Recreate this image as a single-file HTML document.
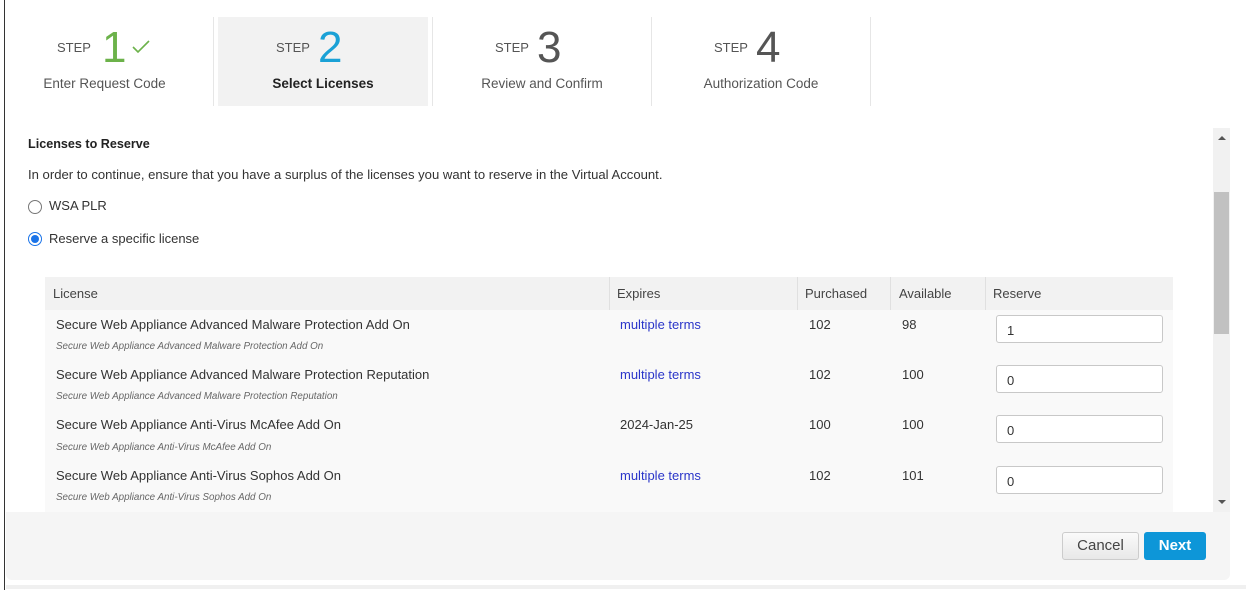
<!DOCTYPE html>
<html><head><style>
*{margin:0;padding:0;box-sizing:border-box}
body{width:1252px;height:594px;background:#fff;font-family:"Liberation Sans",sans-serif;color:#333;position:relative;overflow:hidden}
.a{position:absolute;white-space:nowrap}
.vl{position:absolute;top:17px;height:89px;width:1px;background:#e6e6e6}
.step{position:absolute;font-size:13px;color:#555;top:40px}
.num{position:absolute;font-size:44px;top:26px;line-height:44px}
.lbl{position:absolute;top:76px;font-size:13.5px;color:#555;text-align:center}
.th{position:absolute;top:286px;font-size:13px;color:#444}
.cell{position:absolute;font-size:13px;color:#333}
.sub{position:absolute;font-size:9.8px;font-style:italic;color:#666}
.lnk{color:#2a35c9}
.inp{position:absolute;left:996px;width:167px;height:28px;border:1px solid #c8c8c8;border-radius:3px;background:#fff;font-size:13px;padding:7px 0 0 10px}
.cl{position:absolute;top:277px;width:1px;height:33px;background:#e0e0e0}
</style></head><body>
<div class="a" style="left:4px;top:0;width:1px;height:590px;background:#333"></div>

<div class="a" style="left:218px;top:17px;width:210px;height:89px;background:#f2f2f2"></div>
<div class="vl" style="left:213px"></div><div class="vl" style="left:432px"></div><div class="vl" style="left:651px"></div><div class="vl" style="left:870px"></div>

<div class="step" style="left:57px">STEP</div><div class="num" style="left:102px;color:#6cb24a">1</div>
<svg class="a" style="left:131px;top:39px" width="20" height="16"><path d="M2 8 L7 13 L18 2" fill="none" stroke="#6cb24a" stroke-width="1.6"/></svg>
<div class="lbl" style="left:0;width:209px">Enter Request Code</div>

<div class="step" style="left:276px">STEP</div><div class="num" style="left:318px;color:#1aa1d6">2</div>
<div class="lbl" style="left:218px;width:210px;color:#222;font-weight:bold">Select Licenses</div>

<div class="step" style="left:495px">STEP</div><div class="num" style="left:537px;color:#555">3</div>
<div class="lbl" style="left:437px;width:210px">Review and Confirm</div>

<div class="step" style="left:714px">STEP</div><div class="num" style="left:756px;color:#555">4</div>
<div class="lbl" style="left:656px;width:210px">Authorization Code</div>

<div class="a" style="left:28px;top:137px;font-size:12.6px;font-weight:bold;color:#222">Licenses to Reserve</div>
<div class="a" style="left:28px;top:167px;font-size:13.1px;color:#333">In order to continue, ensure that you have a surplus of the licenses you want to reserve in the Virtual Account.</div>
<div class="a" style="left:28px;top:200px;width:14px;height:14px;border:1px solid #777;border-radius:50%"></div>
<div class="a" style="left:49px;top:198px;font-size:13px">WSA PLR</div>
<div class="a" style="left:28px;top:232px;width:14px;height:14px;border:1px solid #1a73e8;border-radius:50%"><div style="margin:2px;width:8px;height:8px;border-radius:50%;background:#1a73e8"></div></div>
<div class="a" style="left:49px;top:231px;font-size:13px">Reserve a specific license</div>

<div class="a" style="left:45px;top:277px;width:1128px;height:33px;background:#f2f2f2"></div>
<div class="a" style="left:45px;top:310px;width:1128px;height:202px;background:#f9f9f9"></div>
<div class="cl" style="left:609px"></div><div class="cl" style="left:797px"></div><div class="cl" style="left:890px"></div><div class="cl" style="left:985px"></div>
<div class="th" style="left:53px">License</div><div class="th" style="left:617px">Expires</div><div class="th" style="left:805px">Purchased</div><div class="th" style="left:899px">Available</div><div class="th" style="left:993px">Reserve</div>

<div class="cell" style="left:56px;top:317px">Secure Web Appliance Advanced Malware Protection Add On</div>
<div class="sub" style="left:56px;top:341px">Secure Web Appliance Advanced Malware Protection Add On</div>
<div class="cell lnk" style="left:620px;top:317px">multiple terms</div><div class="cell" style="left:809px;top:317px">102</div><div class="cell" style="left:902px;top:317px">98</div>
<div class="inp" style="top:315px">1</div>

<div class="cell" style="left:56px;top:367px">Secure Web Appliance Advanced Malware Protection Reputation</div>
<div class="sub" style="left:56px;top:391px">Secure Web Appliance Advanced Malware Protection Reputation</div>
<div class="cell lnk" style="left:620px;top:367px">multiple terms</div><div class="cell" style="left:809px;top:367px">102</div><div class="cell" style="left:902px;top:367px">100</div>
<div class="inp" style="top:365px">0</div>

<div class="cell" style="left:56px;top:417px">Secure Web Appliance Anti-Virus McAfee Add On</div>
<div class="sub" style="left:56px;top:442px">Secure Web Appliance Anti-Virus McAfee Add On</div>
<div class="cell" style="left:620px;top:417px">2024-Jan-25</div><div class="cell" style="left:809px;top:417px">100</div><div class="cell" style="left:902px;top:417px">100</div>
<div class="inp" style="top:415px">0</div>

<div class="cell" style="left:56px;top:468px">Secure Web Appliance Anti-Virus Sophos Add On</div>
<div class="sub" style="left:56px;top:492px">Secure Web Appliance Anti-Virus Sophos Add On</div>
<div class="cell lnk" style="left:620px;top:468px">multiple terms</div><div class="cell" style="left:809px;top:468px">102</div><div class="cell" style="left:902px;top:468px">101</div>
<div class="inp" style="top:466px">0</div>

<div class="a" style="left:1213px;top:128px;width:17px;height:384px;background:#f1f1f1"></div>
<div class="a" style="left:1214px;top:192px;width:15px;height:142px;background:#c1c1c1"></div>
<div class="a" style="left:1218px;top:136px;border-left:4px solid transparent;border-right:4px solid transparent;border-bottom:4px solid #555"></div>
<div class="a" style="left:1218px;top:500px;border-left:4px solid transparent;border-right:4px solid transparent;border-top:4px solid #555"></div>

<div class="a" style="left:6px;top:512px;width:1224px;height:68px;background:#f5f5f5;border-radius:0 0 6px 6px"></div>
<div class="a" style="left:1062px;top:532px;width:77px;height:28px;border:1px solid #ccc;border-radius:3px;background:linear-gradient(#fafafa,#e8e8e8);font-size:15px;color:#444;text-align:center;line-height:26px">Cancel</div>
<div class="a" style="left:1144px;top:532px;width:62px;height:28px;border-radius:3px;background:#0d96d8;font-size:15px;font-weight:bold;color:#fff;text-align:center;line-height:28px">Next</div>
<div class="a" style="left:6px;top:585px;width:1240px;height:4px;background:#f0f0f0"></div>
</body></html>
